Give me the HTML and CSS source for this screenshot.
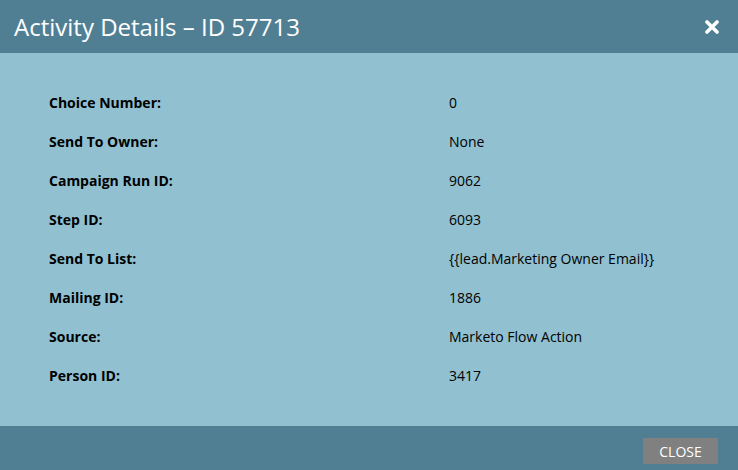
FILE: index.html
```html
<!DOCTYPE html>
<html>
<head>
	<meta charset="utf-8" />
	<title>Activity Details</title>
	<link rel="stylesheet" href="styles.css">
</head>
<body>
<div class="dialog">
	<div class="dialog-header">
		<span class="dialog-title">Activity Details &ndash; ID 57713</span>
		<span class="dialog-x">
			<svg width="14" height="14" viewBox="0 0 14 14"><path d="M2 2L12 12M12 2L2 12" stroke="#fff" stroke-width="3.6" stroke-linecap="round"/></svg>
		</span>
	</div>
	<div class="dialog-body">
		<div class="row"><span class="label">Choice Number:</span><span class="value">0</span></div>
		<div class="row"><span class="label">Send To Owner:</span><span class="value">None</span></div>
		<div class="row"><span class="label">Campaign Run ID:</span><span class="value">9062</span></div>
		<div class="row"><span class="label">Step ID:</span><span class="value">6093</span></div>
		<div class="row"><span class="label">Send To List:</span><span class="value">{{lead.Marketing Owner Email}}</span></div>
		<div class="row"><span class="label">Mailing ID:</span><span class="value">1886</span></div>
		<div class="row"><span class="label">Source:</span><span class="value">Marketo Flow Action</span></div>
		<div class="row"><span class="label">Person ID:</span><span class="value">3417</span></div>
	</div>
	<div class="dialog-footer">
		<button class="btn-close">CLOSE</button>
	</div>
</div>
</body>
</html>
```
FILE: styles.css
```css
* {
	margin: 0;
	padding: 0;
	box-sizing: border-box;
}
body {
	font-family: "Open Sans", sans-serif;
	background: #91c0d1;
}
.dialog {
	width: 738px;
	height: 470px;
	display: flex;
	flex-direction: column;
}
.dialog-header {
	height: 53px;
	background: #507f93;
	display: flex;
	align-items: center;
	justify-content: space-between;
	padding: 0 19px 0 14px;
}
.dialog-title {
	color: #fff;
	font-size: 24px;
	line-height: 1;
}
.dialog-x {
	display: flex;
	cursor: pointer;
}
.dialog-body {
	flex: 1;
	background: #91c0d1;
	padding: 30px 0 0 49px;
	font-size: 14px;
	color: #000;
}
.row {
	display: flex;
	align-items: center;
	height: 39px;
}
.label {
	width: 400px;
	font-weight: bold;
}
.dialog-footer {
	height: 44px;
	background: #507f93;
	display: flex;
	justify-content: flex-end;
	align-items: flex-start;
	padding: 12px 20px 0 0;
}
.btn-close {
	width: 75px;
	height: 26px;
	background: #808080;
	border: none;
	color: #fff;
	font-family: "Open Sans", sans-serif;
	font-size: 14px;
	cursor: pointer;
}
```
